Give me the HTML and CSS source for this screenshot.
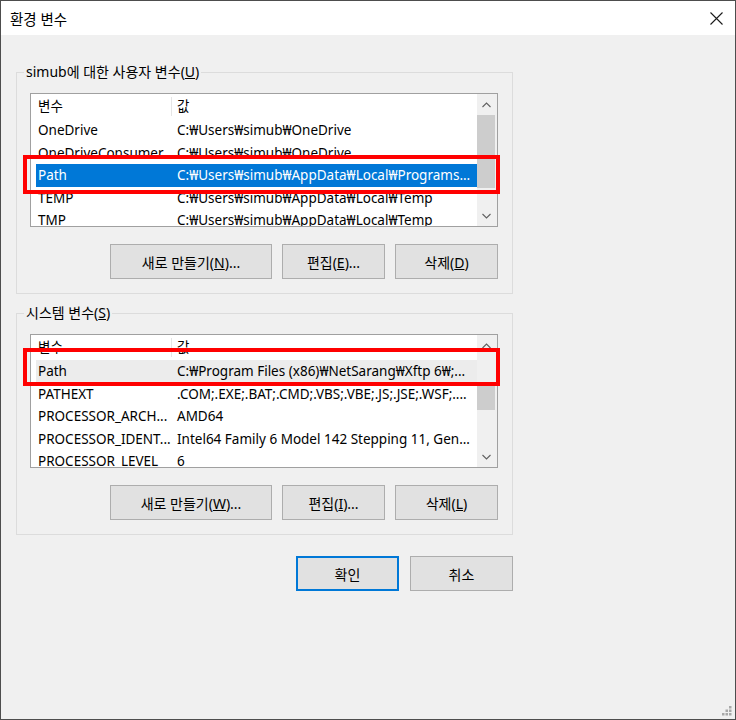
FILE: index.html
```html
<!DOCTYPE html>
<html lang="ko">
<head>
<meta charset="utf-8">
<title>환경 변수</title>
<link rel="stylesheet" href="styles.css">
</head>
<body>
<div class="window">
  <div class="titlebar">
    <span class="title">환경 변수</span>
    <svg class="close" width="13" height="13" viewBox="0 0 13 13"><path d="M0.5 0.5 L12.5 12.5 M12.5 0.5 L0.5 12.5" stroke="#1a1a1a" stroke-width="1.1" fill="none"/></svg>
  </div>
  <div class="body">
    <div class="group group-user">
      <div class="group-title">simub에 대한 사용자 변수(<u>U</u>)</div>
      <div class="list">
        <div class="list-main">
          <div class="lv-header"><div class="c1">변수</div><div class="c2">값</div></div>
          <div class="row"><div class="c1">OneDrive</div><div class="c2">C:₩Users₩simub₩OneDrive</div></div>
          <div class="row"><div class="c1">OneDriveConsumer</div><div class="c2">C:₩Users₩simub₩OneDrive</div></div>
          <div class="row selected"><div class="c1">Path</div><div class="c2">C:₩Users₩simub₩AppData₩Local₩Programs...</div></div>
          <div class="row"><div class="c1">TEMP</div><div class="c2">C:₩Users₩simub₩AppData₩Local₩Temp</div></div>
          <div class="row"><div class="c1">TMP</div><div class="c2">C:₩Users₩simub₩AppData₩Local₩Temp</div></div>
        </div>
        <div class="scrollbar">
          <div class="sb-btn"><svg width="9" height="6" viewBox="0 0 9 6"><path d="M0.5 5 L4.5 1 L8.5 5" stroke="#606060" stroke-width="1.1" fill="none"/></svg></div>
          <div class="sb-track"><div class="sb-thumb thumb-user"></div></div>
          <div class="sb-btn"><svg width="9" height="6" viewBox="0 0 9 6"><path d="M0.5 1 L4.5 5 L8.5 1" stroke="#606060" stroke-width="1.1" fill="none"/></svg></div>
        </div>
      </div>
      <div class="btn-row">
        <button class="btn btn-new">새로 만들기(<u>N</u>)...</button>
        <button class="btn btn-edit">편집(<u>E</u>)...</button>
        <button class="btn btn-del">삭제(<u>D</u>)</button>
      </div>
    </div>

    <div class="group group-sys">
      <div class="group-title">시스템 변수(<u>S</u>)</div>
      <div class="list">
        <div class="list-main">
          <div class="lv-header"><div class="c1">변수</div><div class="c2">값</div></div>
          <div class="row inactive"><div class="c1">Path</div><div class="c2">C:₩Program Files (x86)₩NetSarang₩Xftp 6₩;...</div></div>
          <div class="row"><div class="c1">PATHEXT</div><div class="c2">.COM;.EXE;.BAT;.CMD;.VBS;.VBE;.JS;.JSE;.WSF;....</div></div>
          <div class="row"><div class="c1">PROCESSOR_ARCH...</div><div class="c2">AMD64</div></div>
          <div class="row"><div class="c1">PROCESSOR_IDENT...</div><div class="c2">Intel64 Family 6 Model 142 Stepping 11, Gen...</div></div>
          <div class="row"><div class="c1">PROCESSOR_LEVEL</div><div class="c2">6</div></div>
        </div>
        <div class="scrollbar">
          <div class="sb-btn"><svg width="9" height="6" viewBox="0 0 9 6"><path d="M0.5 5 L4.5 1 L8.5 5" stroke="#606060" stroke-width="1.1" fill="none"/></svg></div>
          <div class="sb-track"><div class="sb-thumb thumb-sys"></div></div>
          <div class="sb-btn"><svg width="9" height="6" viewBox="0 0 9 6"><path d="M0.5 1 L4.5 5 L8.5 1" stroke="#606060" stroke-width="1.1" fill="none"/></svg></div>
        </div>
      </div>
      <div class="btn-row">
        <button class="btn btn-new">새로 만들기(<u>W</u>)...</button>
        <button class="btn btn-edit">편집(<u>I</u>)...</button>
        <button class="btn btn-del">삭제(<u>L</u>)</button>
      </div>
    </div>

    <div class="dialog-buttons">
      <button class="btn btn-dlg btn-default">확인</button>
      <button class="btn btn-dlg">취소</button>
    </div>
  </div>

  <div class="mark mark-user"></div>
  <div class="mark mark-sys"></div>

  <svg class="grip" width="12" height="11" viewBox="0 0 12 11">
    <rect x="8" y="0" width="2.5" height="2.5" fill="#a8a8a8"/>
    <rect x="4.5" y="3.5" width="2.5" height="2.5" fill="#a8a8a8"/>
    <rect x="8" y="3.5" width="2.5" height="2.5" fill="#a8a8a8"/>
    <rect x="1" y="7" width="2.5" height="2.5" fill="#a8a8a8"/>
    <rect x="4.5" y="7" width="2.5" height="2.5" fill="#a8a8a8"/>
    <rect x="8" y="7" width="2.5" height="2.5" fill="#a8a8a8"/>
  </svg>
</div>
</body>
</html>
```

FILE: styles.css
```css
* { box-sizing: border-box; }

html, body {
  margin: 0;
  padding: 0;
  background: #f0f0f0;
}

body {
  font-family: "Noto Sans", "Noto Sans CJK KR", sans-serif;
  font-size: 13.5px;
  color: #000;
}

.window {
  position: relative;
  width: 736px;
  height: 720px;
  border: 1px solid #4d4d4d;
  background: #f0f0f0;
  overflow: hidden;
}

.titlebar {
  height: 34px;
  background: #fff;
  display: flex;
  align-items: center;
  justify-content: space-between;
  padding-left: 9px;
}

.title {
  font-size: 14.5px;
  color: #000;
}

.close {
  margin-right: 12px;
  display: block;
}

.body {
  padding-left: 15px;
  display: flex;
  flex-direction: column;
}

.group {
  position: relative;
  width: 497px;
  border: 1px solid #dcdcdc;
  padding: 20px 14px 14px 13px;
}

.group-user { margin-top: 37px; }
.group-sys { margin-top: 19px; }

.group-title {
  position: absolute;
  top: -11px;
  left: 7px;
  padding: 0 2px;
  background: #f0f0f0;
  font-size: 14px;
  line-height: 20px;
  white-space: nowrap;
}

.list {
  width: 468px;
  height: 134px;
  border: 1px solid #a0a0a0;
  background: #fff;
  display: flex;
}

.list-main {
  flex: 1;
  overflow: hidden;
  min-width: 0;
}

.lv-header {
  display: grid;
  grid-template-columns: 136px 1fr;
  height: 25px;
  margin-left: 5px;
}

.lv-header .c1 {
  margin-top: 3px;
  height: 19px;
  line-height: 19px;
  border-right: 1px solid #e5e5e5;
  padding-left: 2px;
}

.lv-header .c2 {
  margin-top: 3px;
  line-height: 19px;
  padding-left: 5px;
}

.row {
  display: grid;
  grid-template-columns: 136px 1fr;
  height: 22.5px;
  line-height: 22.5px;
  margin-left: 5px;
  white-space: nowrap;
}

.row .c1 {
  padding-left: 2px;
  overflow: hidden;
}

.row .c2 {
  padding-left: 5px;
  overflow: hidden;
}

.row.selected {
  background: #0078d7;
  color: #fff;
}

.row.inactive {
  background: #ececec;
}

.scrollbar {
  width: 20px;
  background: #f0f0f0;
  display: flex;
  flex-direction: column;
}

.sb-btn {
  height: 21px;
  display: flex;
  align-items: center;
  justify-content: center;
  padding-right: 2px;
}

.sb-btn svg { display: block; }

.sb-track {
  flex: 1;
  padding-right: 2px;
}

.sb-thumb {
  background: #cdcdcd;
}

.thumb-user {
  height: 73px;
}

.thumb-sys {
  margin-top: 27px;
  height: 27px;
}

.btn-row {
  display: flex;
  justify-content: flex-end;
  gap: 10px;
  margin-top: 17px;
}

.btn {
  height: 35px;
  background: #e1e1e1;
  border: 1px solid #adadad;
  font-family: "Noto Sans", "Noto Sans CJK KR", sans-serif;
  font-size: 14px;
  color: #000;
  padding: 0;
  margin: 0;
}

.btn-new { width: 162px; }
.btn-edit { width: 103px; }
.btn-del { width: 103px; }

.dialog-buttons {
  width: 497px;
  display: flex;
  justify-content: flex-end;
  gap: 11px;
  margin-top: 21px;
}

.btn-dlg { width: 103px; }

.btn-default {
  border: 2px solid #0078d7;
}

.mark {
  position: absolute;
  left: 22px;
  width: 477px;
  border: 4px solid #ff0000;
}

.mark-user {
  top: 154px;
  height: 39px;
}

.mark-sys {
  top: 347px;
  height: 38px;
}

.grip {
  position: absolute;
  right: 2px;
  bottom: 2px;
  display: block;
}
```
